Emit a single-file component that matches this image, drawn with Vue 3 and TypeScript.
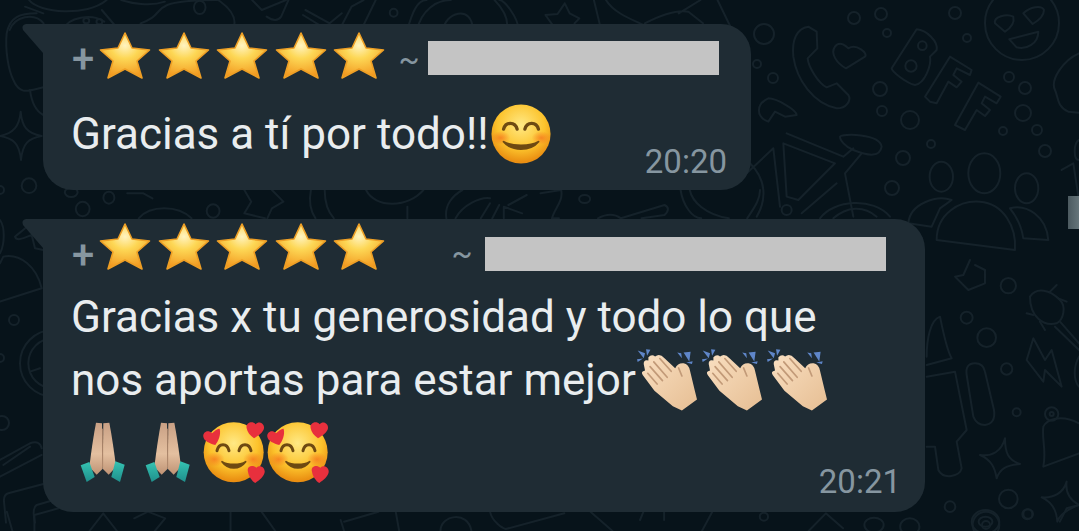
<script setup lang="ts">
const stars = [1, 2, 3, 4, 5]

// doodle circles of the chat wallpaper, [cx, cy, r] in page pixels
const dots: number[][] = [
  [764, 34, 10], [757, 64, 4], [773, 78, 5], [854, 18, 6], [881, 14, 6], [887, 33, 4],
  [955, 13, 6], [967, 38, 4], [1009, 77, 5], [1025, 88, 6], [1023, 113, 8], [1003, 131, 4],
  [1037, 130, 5], [1045, 151, 6], [880, 89, 7], [882, 111, 5], [910, 120, 9], [931, 144, 4],
  [903, 158, 7], [892, 188, 7], [1022, 23, 37],
  [0, 190, 4], [0, 358, 4], [2, 423, 7],
]
</script>

<template>
  <div class="page">
    <svg class="wallpaper" width="1079" height="531" viewBox="0 0 1079 531" fill="none">
      <circle v-for="(d, i) in dots" :key="i" :cx="d[0]" :cy="d[1]" :r="d[2]" />

      <!-- right, upper -->
      <g transform="translate(740 0) scale(.3333)">
        <path d="M765 70C760 50 800 40 820 50C825 70 810 85 795 95Z" />
        <path d="M850 40C870 20 905 15 912 30C912 50 890 65 878 72Z" />
        <path d="M808 118L895 95C895 130 860 150 830 142Z" />
        <path d="M205 80C170 85 155 120 160 170C170 240 220 310 290 325C320 325 335 300 325 285L290 250L260 262C235 250 205 200 203 175L232 145L230 95Z" />
        <path d="M285 140C300 120 320 140 325 145C350 130 385 160 375 170L318 205C290 190 270 160 285 140Z" />
        <path d="M530 88C560 90 595 125 590 150L570 170C575 195 555 250 525 255C500 250 455 215 455 205Z" />
        <circle cx="547" cy="137" r="13" />
        <circle cx="513" cy="198" r="17" />
        <path d="M630 170L695 210L690 225L650 205L640 225L665 245L650 262L625 245L590 310L570 305L555 290Z" />
        <path d="M715 248L782 290L770 310L735 290L725 310L750 330L735 348L710 330L675 390L645 375Z" />
        <path d="M1017 160C970 180 930 240 945 270C955 290 950 320 985 335L1017 338" />
        <path d="M85 295C50 310 45 350 85 365L105 335L135 350L170 345C170 330 110 295 85 295Z" />
        <path d="M140 400L310 470L340 445" />
        <path d="M300 410C305 400 420 400 425 440C420 470 390 470 340 450C315 440 300 420 300 410Z" />
        <path d="M365 460L315 520L340 650" />
        <path d="M130 430L285 490L175 600L140 590Z" />
        <path d="M100 445L20 520M100 445L120 620M30 490C80 540 80 600 50 650" />
        <path d="M240 655C280 600 400 590 450 650M280 655C320 620 370 615 410 650M290 550L185 640" />
        <circle cx="140" cy="630" r="15" />
        <ellipse cx="604" cy="530" rx="35" ry="45" />
        <ellipse cx="733" cy="520" rx="48" ry="60" />
        <ellipse cx="860" cy="565" rx="35" ry="45" />
        <path d="M505 670C510 610 590 585 635 600L600 625L575 680Z" />
        <path d="M590 720C590 640 660 600 720 605C790 610 830 680 825 750Z" />
        <path d="M810 625C860 610 920 650 925 720L850 715C845 680 830 650 810 625Z" />
        <path d="M1017 420C1000 430 1000 480 1017 480M965 510L1000 490L1017 600" />
      </g>

      <!-- right, lower -->
      <g transform="translate(920 260) scale(.3333)">
        <path d="M150 0L130 45L105 50L145 90L195 70L195 30L165 15" />
        <circle cx="140" cy="173" r="18" />
        <circle cx="200" cy="233" r="28" />
        <circle cx="265" cy="77" r="23" />
        <circle cx="260" cy="327" r="17" />
        <circle cx="290" cy="457" r="12" />
        <circle cx="265" cy="717" r="28" />
        <circle cx="90" cy="740" r="16" />
        <circle cx="322" cy="763" r="15" />
        <circle cx="198" cy="795" r="40" />
        <circle cx="198" cy="795" r="12" />
        <path d="M330 110C350 80 390 90 420 120C440 140 430 180 410 190C370 200 330 170 330 110Z" />
        <path d="M420 185L477 250M405 200L477 270M390 95L410 75M415 115L440 125M340 165L320 160M360 185L375 210" />
        <path d="M340 235L320 300L370 365L375 330L425 380L395 270L375 300Z" />
        <path d="M165 310Q135 310 140 345L160 470Q170 495 195 495Q228 490 222 450L195 335Q190 310 165 310Z" />
        <path d="M60 170C30 180 20 240 20 290M60 170C70 220 80 270 95 295L20 315" />
        <path d="M20 350L105 335L140 510L110 545L125 625C120 650 70 660 55 630L45 560L20 560" />
        <path d="M255 535C255 580 265 600 300 612C260 615 240 625 230 655C225 625 215 600 180 585C215 590 245 575 255 535Z" />
        <path d="M440 665C435 700 450 720 477 735C450 745 420 760 412 785C410 750 395 725 365 712C400 715 430 700 440 665Z" />
        <circle cx="395" cy="462" r="20" />
        <circle cx="395" cy="462" r="6" />
        <path d="M370 500C380 480 420 460 477 490M370 500C365 540 380 570 370 620L477 580M477 290C460 320 460 360 477 380" />
      </g>

      <!-- left edge -->
      <g transform="scale(.3333)">
        <path d="M130 262C90 270 60 290 40 240C25 210 15 150 20 100C30 50 60 40 110 40" />
        <path d="M90 270C95 310 110 335 130 345M75 20L130 40" />
        <path d="M62 335C66 380 80 400 125 408C85 415 68 430 63 480C58 430 40 415 0 408C40 400 58 380 62 335Z" />
        <circle cx="87" cy="557" r="22" />
        <path d="M0 660C15 680 15 730 0 760M130 690L95 665C75 690 55 700 45 710C50 725 70 715 95 705L105 745L130 750" />
        <path d="M0 905L125 865C110 800 60 760 10 770L0 790" />
        <circle cx="42" cy="960" r="15" />
        <circle cx="160" cy="1090" r="100" />
        <circle cx="160" cy="1090" r="75" />
        <path d="M90 1115L120 1105" />
        <path d="M0 1380L90 1330Q120 1320 125 1345M10 1395L90 1340M0 1430L125 1365" />
        <path d="M130 1452L25 1480Q10 1485 12 1505L18 1568M180 1495L110 1515Q95 1525 105 1568" />
      </g>

      <!-- strip above the first bubble -->
      <g transform="scale(.4848 .3333)">
        <path d="M60 0C80 40 180 50 220 0M20 90C30 50 70 35 90 70M130 90C140 50 190 40 215 65M210 30L245 90" />
        <ellipse cx="178" cy="62" rx="6" ry="8" />
        <ellipse cx="205" cy="65" rx="6" ry="8" />
        <path d="M250 0C270 10 310 20 340 5M290 70C330 50 320 30 345 15C370 0 420 0 450 0" />
        <ellipse cx="412" cy="22" rx="12" ry="20" />
        <path d="M450 0C480 30 490 60 480 90M520 0L540 30L590 0M550 50Q570 70 580 50L595 0" />
        <path d="M630 30L680 70L705 40M625 45L670 85M700 90L725 20L750 0M745 90L775 0" />
        <ellipse cx="812" cy="38" rx="8" ry="12" />
        <path d="M840 90C850 40 860 0 880 0M860 90C870 30 900 0 930 0M915 90C915 40 975 10 975 90" />
        <path d="M1020 0C1040 30 1050 60 1045 90M1070 90C1068 50 1040 0 1030 0" />
        <path d="M1165 10L1175 40L1195 55L1185 70M1165 10L1150 42L1125 45L1145 85" />
        <path d="M1225 0L1240 90M1250 0C1270 50 1330 70 1345 90M1330 70C1370 40 1400 30 1420 35L1450 70M1445 0L1400 40M1480 0L1510 90" />
      </g>

      <!-- strip between the bubbles -->
      <g transform="translate(40 185) scale(.4592 .3333)">
        <circle cx="68" cy="22" r="14" />
        <ellipse cx="93" cy="72" rx="15" ry="22" />
        <ellipse cx="150" cy="38" rx="12" ry="18" />
        <path d="M190 25L225 25L245 40M215 100C240 60 300 60 330 100" />
        <ellipse cx="377" cy="78" rx="14" ry="20" />
        <path d="M445 15L460 50L445 85L490 100M505 15L530 50L505 70L495 100" />
        <path d="M590 15C585 50 590 80 600 100M620 15C620 60 630 85 640 100M710 15C730 70 800 70 835 15M800 65L800 100" />
        <path d="M885 100C880 60 900 30 920 15M905 100C920 60 960 35 980 40M960 100L980 55M985 100L1000 60M1010 100L1010 65L1050 85M1020 60L1060 30M1090 25L1135 15C1140 50 1120 70 1115 100L1130 100" />
        <circle cx="1186" cy="42" r="12" />
        <path d="M1215 100C1235 85 1250 85 1265 100L1360 60Q1375 70 1360 90L1310 100" />
        <path d="M1395 15C1400 60 1420 100 1440 100M1415 15C1420 50 1450 90 1500 100M1540 100C1560 60 1568 40 1568 15" />
      </g>

      <!-- strip under the second bubble -->
      <g transform="translate(0 505) scale(.6882 .3333)">
        <path d="M10 20L18 78M85 10L50 30L50 78M130 78L150 25L170 78M195 40L215 20L240 40L225 78M335 20L335 78M380 20L400 78" />
        <path d="M500 50L550 20M500 78L495 45M575 20L580 78M640 78C640 30 680 15 685 78" />
        <path d="M712 20C715 50 730 70 735 72L820 25M858 20L890 78M935 20L930 45M965 20V45M1035 20L1020 78" />
        <ellipse cx="1110" cy="35" rx="6" ry="12" />
        <path d="M1175 78L1200 25L1225 70" />
        <ellipse cx="1270" cy="60" rx="14" ry="22" />
        <ellipse cx="1322" cy="65" rx="14" ry="25" />
        <ellipse cx="1432" cy="50" rx="20" ry="35" />
        <ellipse cx="1432" cy="50" rx="10" ry="15" />
        <ellipse cx="1494" cy="27" rx="7" ry="14" />
        <path d="M1540 50L1550 10L1568 0" />
      </g>
    </svg>

    <!-- shared emoji artwork -->
    <svg class="defs" width="0" height="0">
      <defs>
        <radialGradient id="starFill" cx="50%" cy="28%" r="72%">
          <stop offset="0%" stop-color="#fff3c0" />
          <stop offset="40%" stop-color="#fdd755" />
          <stop offset="100%" stop-color="#f2981f" />
        </radialGradient>
        <radialGradient id="faceFill" cx="50%" cy="35%" r="62%">
          <stop offset="0%" stop-color="#ffe985" />
          <stop offset="65%" stop-color="#fcc32c" />
          <stop offset="100%" stop-color="#ea8f12" />
        </radialGradient>
        <radialGradient id="cheek">
          <stop offset="0%" stop-color="#f5741f" stop-opacity=".75" />
          <stop offset="100%" stop-color="#f5741f" stop-opacity="0" />
        </radialGradient>
        <linearGradient id="clapFill" x1="0" y1="0" x2="1" y2="1">
          <stop offset="0%" stop-color="#f9dfc1" />
          <stop offset="100%" stop-color="#e6be93" />
        </linearGradient>
        <linearGradient id="prayFill" x1="0" y1="0" x2="0" y2="1">
          <stop offset="0%" stop-color="#c9a084" />
          <stop offset="60%" stop-color="#e4c0a0" />
          <stop offset="100%" stop-color="#be9274" />
        </linearGradient>
        <linearGradient id="cuffFill" x1="0" y1="0" x2="0" y2="1">
          <stop offset="0%" stop-color="#35c3b2" />
          <stop offset="100%" stop-color="#1f8f8c" />
        </linearGradient>
        <symbol id="star" viewBox="0 0 52 50">
          <path d="M26 2L33 17L50.5 19L38 30L43 47L26 38L9 47L14 30L1.5 19L19 17Z" fill="url(#starFill)" stroke="#ee9f25" stroke-width="1.6" stroke-linejoin="round" />
        </symbol>
        <symbol id="smile" viewBox="0 0 64 64">
          <circle cx="32" cy="32" r="30.5" fill="url(#faceFill)" />
          <ellipse cx="11" cy="36" rx="10" ry="7" fill="url(#cheek)" />
          <ellipse cx="53" cy="36" rx="10" ry="7" fill="url(#cheek)" />
          <path d="M14 27C16 19 26 19 28 27M36 27C38 19 48 19 50 27" fill="none" stroke="#6e4a12" stroke-width="3.4" stroke-linecap="round" />
          <path d="M14 40C22 50 42 50 50 40C42 45 22 45 14 40Z" fill="#6e4a12" stroke="#6e4a12" stroke-width="2" stroke-linejoin="round" />
        </symbol>
        <symbol id="clap" viewBox="55 25 185 190">
          <path d="M60 32L82 40L78 55ZM85 28L98 30L88 48ZM58 58L76 56L60 66ZM178 38L190 40L192 55ZM197 38L218 36L214 65ZM205 68L224 64L222 72Z" fill="#5f86c9" />
          <path d="M75 105Q68 95 82 92L78 72Q78 58 92 62L92 52Q102 42 112 50Q125 38 140 55L172 85Q180 68 197 70Q212 72 216 92L230 150L237 178L192 211L165 198L110 152Z" fill="url(#clapFill)" />
          <path d="M108 66L148 112M97 80L134 122M90 100L118 132M126 56L160 94M182 84L192 108" fill="none" stroke="#c29a78" stroke-width="5" stroke-linecap="round" />
        </symbol>
        <symbol id="pray" viewBox="60 40 135 180">
          <path d="M108 42L126 44L128 180L110 198L88 175Q97 100 108 42Z" fill="url(#prayFill)" />
          <path d="M148 42L130 44L128 180L146 198L168 175Q159 100 148 42Z" fill="url(#prayFill)" />
          <path d="M62 170L88 160L104 205L80 220Z" fill="url(#cuffFill)" />
          <path d="M194 168L166 158L154 205L180 220Z" fill="url(#cuffFill)" />
          <path d="M128 60V175" stroke="#b58a6c" stroke-width="3" />
        </symbol>
        <symbol id="love" viewBox="422 35 192 192">
          <circle cx="517" cy="132" r="90" fill="url(#faceFill)" />
          <ellipse cx="460" cy="153" rx="30" ry="22" fill="url(#cheek)" />
          <ellipse cx="575" cy="153" rx="30" ry="22" fill="url(#cheek)" />
          <path d="M467 127C472 103 498 103 503 127M533 127C538 103 564 103 569 127" fill="none" stroke="#6e4a12" stroke-width="9" stroke-linecap="round" />
          <path d="M482 160C500 185 535 185 553 160C535 171 500 171 482 160Z" fill="#6e4a12" stroke="#6e4a12" stroke-width="5" stroke-linejoin="round" />
          <path d="M475 62C476 60 465 62 452 75C440 62 424 72 426 85C428 98 445 105 462 110C470 100 480 80 475 62Z" fill="#e8303d" />
          <path d="M556 60C552 45 572 35 583 48C592 36 610 45 608 60C606 72 592 82 578 90C566 82 558 72 556 60Z" fill="#e8303d" />
          <path d="M560 190C555 175 572 167 585 178C596 168 612 178 610 192C608 205 594 216 582 224C572 218 562 204 560 190Z" fill="#e8303d" />
        </symbol>
      </defs>
    </svg>

    <div class="scroll-handle"></div>

    <div class="chat">
      <div class="bubble first">
        <div class="sender">
          <span class="plus">+</span>
          <svg v-for="s in stars" :key="s" class="star"><use href="#star" /></svg>
          <span class="tilde">~</span>
          <span class="redacted"></span>
        </div>
        <div class="foot">
          <div class="text line">Gracias a tí por todo!!<svg class="emoji smile"><use href="#smile" /></svg></div>
          <span class="time">20:20</span>
        </div>
      </div>

      <div class="bubble second">
        <div class="sender">
          <span class="plus">+</span>
          <svg v-for="s in stars" :key="s" class="star"><use href="#star" /></svg>
          <span class="tilde">~</span>
          <span class="redacted"></span>
        </div>
        <div class="text line first-line">Gracias x tu generosidad y todo lo que</div>
        <div class="text line">nos aportas para estar mejor<svg v-for="n in 3" :key="n" class="emoji clap"><use href="#clap" /></svg></div>
        <div class="foot">
          <div class="emoji-row">
            <svg class="pray"><use href="#pray" /></svg>
            <svg class="pray"><use href="#pray" /></svg>
            <svg class="love"><use href="#love" /></svg>
            <svg class="love"><use href="#love" /></svg>
          </div>
          <span class="time">20:21</span>
        </div>
      </div>
    </div>
  </div>
</template>

<style scoped>
.page {
  position: relative;
  width: 1079px;
  height: 531px;
  overflow: hidden;
  background: #07131a;
  font-family: Roboto, "Liberation Sans", sans-serif;
}

.wallpaper {
  position: absolute;
  top: 0;
  left: 0;
  stroke: #15222a;
  stroke-width: 2;
  stroke-linecap: round;
  stroke-linejoin: round;
}

.wallpaper * {
  vector-effect: non-scaling-stroke;
}

.defs {
  position: absolute;
}

.scroll-handle {
  position: absolute;
  top: 196px;
  right: 0;
  width: 11px;
  height: 33px;
  background: linear-gradient(90deg, #4c5a60, #66757a);
}

.chat {
  position: relative;
  display: flex;
  flex-direction: column;
  align-items: flex-start;
  gap: 29px;
  padding: 24px 0 0 43px;
}

.bubble {
  position: relative;
  background: #1f2c34;
  border-radius: 0 30px 30px 30px;
  padding: 6px 24px 0 29px;
  box-sizing: border-box;
}

.bubble::before {
  content: "";
  position: absolute;
  top: 0;
  left: -21px;
  width: 21px;
  height: 30px;
  background: #1f2c34;
  clip-path: path("M4 0H21V29L1 6Q-1 1 4 0Z");
}

.first {
  width: 708px;
  height: 166px;
}

.second {
  width: 882px;
  height: 293px;
  padding-top: 2px;
}

.sender {
  display: flex;
  align-items: center;
  height: 52px;
}

.plus {
  width: 27px;
  flex-shrink: 0;
  font-size: 40px;
  font-weight: 500;
  line-height: 1;
  color: #8696a0;
}

.first .plus {
  margin-top: 8px;
}

.second .plus {
  margin-top: 18px;
}

.star {
  width: 52px;
  height: 50px;
  margin-right: 6.5px;
  flex-shrink: 0;
}

.tilde {
  font-size: 31px;
  line-height: 1;
  color: #8696a0;
}

.first .tilde {
  margin: 6px 0 0 7px;
}

.second .tilde {
  margin: 12px 0 0 60px;
}

.redacted {
  height: 34px;
  background: #c4c4c4;
}

.first .redacted {
  width: 291px;
  margin: 4px 0 0 8px;
}

.second .redacted {
  width: 401px;
  margin: 14px 0 0 12px;
}

.text {
  font-size: 44px;
  color: #e9edef;
  white-space: nowrap;
  margin-left: -1px;
}

.line {
  display: flex;
  align-items: center;
  height: 64px;
  line-height: 64px;
}

.second .line {
  height: 63px;
  line-height: 63px;
}

.first-line {
  margin-top: 13px;
}

.emoji {
  flex-shrink: 0;
}

.smile {
  width: 62px;
  height: 62px;
  margin-left: 1px;
}

.clap {
  width: 62px;
  height: 64px;
  margin: -2px 3px 0 0;
}

.foot {
  display: flex;
  align-items: flex-end;
  justify-content: space-between;
}

.first .foot {
  margin-top: 20px;
}

.emoji-row {
  display: flex;
  align-items: center;
  height: 64px;
  padding-left: 8px;
  margin-top: 8px;
}

.pray {
  width: 45px;
  height: 60px;
  margin-right: 20px;
}

.pray + .pray {
  margin-right: 12px;
}

.love {
  width: 64px;
  height: 64px;
}

.time {
  font-size: 33px;
  line-height: 34px;
  color: #8696a0;
}

.first .time {
  margin-bottom: -13px;
}

.second .time {
  margin-bottom: -15px;
}
</style>

<style>
body {
  background: #07131a;
}
</style>
